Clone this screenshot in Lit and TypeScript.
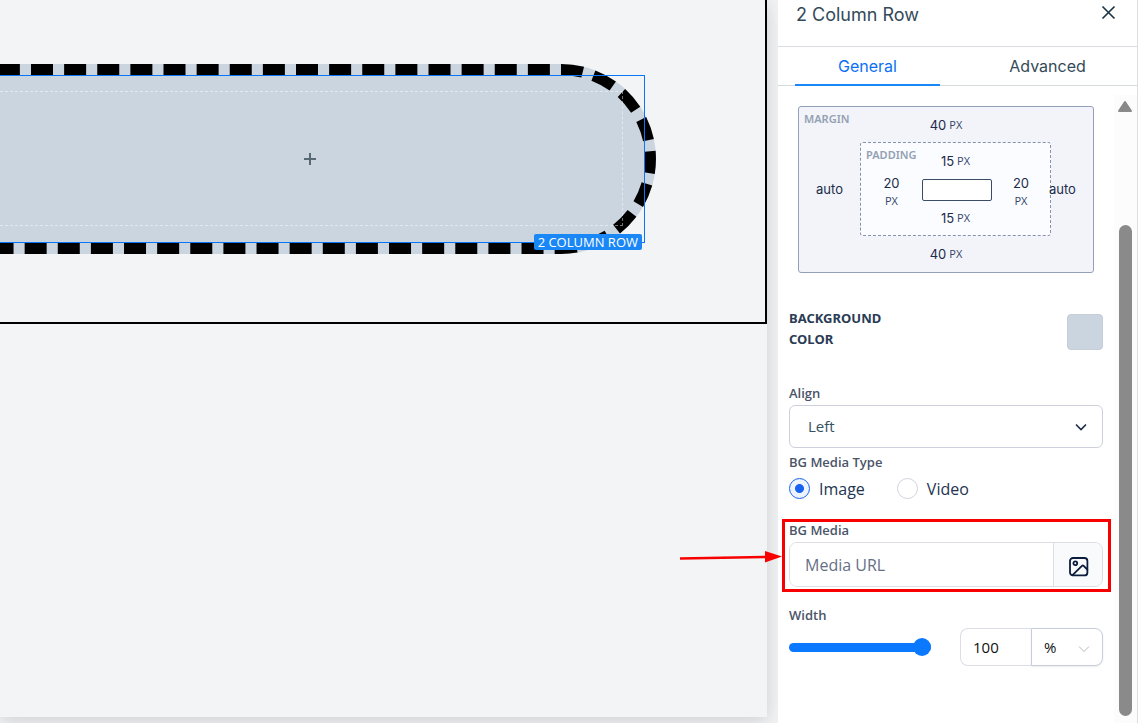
import { LitElement, html, css } from "lit";
import { customElement, property, state } from "lit/decorators.js";

const chevron = (cls: string) => html`<svg class=${cls} width="14" height="14" viewBox="0 0 14 14" aria-hidden="true">
  <path d="M2 4.5 L7 9.5 L12 4.5" fill="none" stroke="currentColor" />
</svg>`;

/** Page preview with the selected two column row. */
@customElement("page-canvas")
class PageCanvas extends LitElement {
  static styles = css`
    :host {
      display: flex;
      flex: 1;
      min-width: 0;
      overflow: hidden;
      background: #f2f3f5;
      padding: 0 11px 6px 0;
      box-sizing: border-box;
    }
    .page {
      flex: 1;
      min-width: 0;
      background: #f2f4f6;
      box-shadow: 0 4px 18px rgba(0, 0, 0, 0.15);
    }
    .section {
      border: solid #000;
      border-width: 0 2px 2px 0;
      padding: 64px 109px 68px 0;
    }
    .row {
      position: relative;
      box-sizing: border-box;
      height: 190px;
      padding: 27px 33px 28px 0;
      display: flex;
      background: #cbd5e0;
      border-radius: 0 95px 95px 0;
    }
    .dashes {
      position: absolute;
      top: 0;
      right: 0;
      overflow: visible;
    }
    .column {
      position: relative;
      flex: 1;
      display: flex;
      align-items: center;
      justify-content: center;
      padding-right: 2px;
      border: 1px dashed rgba(255, 255, 255, 0.45);
      border-left: 0;
    }
    .add {
      border: 0;
      padding: 0;
      background: none;
      display: flex;
      color: #566975;
    }
    .outline {
      position: absolute;
      inset: 11px 11px 11px 0;
      border: 1px solid #0a76f5;
      border-left: 0;
    }
    .tag {
      position: absolute;
      right: 14px;
      bottom: 4px;
      padding: 0 4px;
      border-radius: 2px;
      background: #1a87f7;
      color: #fff;
      font: 13px/16px "Open Sans", sans-serif;
      white-space: nowrap;
    }
  `;

  render() {
    return html`<main class="page">
      <section class="section">
        <div class="row">
          <svg class="dashes" width="656" height="190" aria-hidden="true">
            <path
              d="M-35.25 5.5 H561 A89.5 89.5 0 0 1 561 184.5 H-40"
              fill="none"
              stroke="#000"
              stroke-width="11"
              stroke-dasharray="22 11.125"
            />
          </svg>
          <div class="column">
            <button class="add" aria-label="Add element">
              <svg width="12" height="12"><path d="M6 0V12M0 6H12" stroke="currentColor" stroke-width="2" /></svg>
            </button>
          </div>
          <div class="outline"></div>
          <span class="tag">2 COLUMN ROW</span>
        </div>
      </section>
    </main>`;
  }
}

/** Nested margin and padding editor. */
@customElement("box-model")
class BoxModel extends LitElement {
  static styles = css`
    :host {
      display: block;
      font: 13px/18px Inter, sans-serif;
      color: #1b2b4b;
    }
    .margin {
      position: relative;
      box-sizing: border-box;
      height: 167px;
      display: grid;
      grid-template: 35px 94px 36px / 61px 191px 1fr;
      border: 1px solid #94a0b8;
      border-radius: 3px;
      background: #f2f4f9;
    }
    .padding {
      position: relative;
      box-sizing: border-box;
      display: grid;
      grid-template: 36px 22px 34px / 61px 70px 1fr;
      border: 1px dashed #8592ad;
      border-radius: 3px;
      background: #fafcff;
    }
    .caption {
      position: absolute;
      top: 4px;
      left: 5px;
      font: 600 11px/16px "Noto Sans", sans-serif;
      color: #94a0b4;
    }
    .value {
      border: 0;
      padding: 0;
      background: none;
      font: inherit;
      color: inherit;
      display: flex;
      align-items: center;
      justify-content: center;
      gap: 3px;
    }
    .wide {
      grid-column: 1 / -1;
    }
    .side {
      grid-row: 1 / -1;
      flex-direction: column;
      gap: 0;
      padding-top: 6px;
    }
    .west {
      grid-column: 1;
    }
    .east {
      grid-column: 3;
    }
    .start {
      justify-content: flex-start;
      margin-left: -2px;
      z-index: 1;
    }
    .unit {
      font: 11px/18px "Open Sans", sans-serif;
      color: #35456a;
    }
    .content {
      grid-area: 2 / 2;
      border: 1px solid #3d4c66;
      border-radius: 2px;
      background: #fff;
    }
    .top {
      grid-row: 1;
    }
    .bottom {
      grid-row: 3;
    }
  `;

  private px(value: number, place: string) {
    return html`<button class="value ${place}"><span>${value}</span><span class="unit">PX</span></button>`;
  }

  render() {
    return html`<div class="margin">
      <span class="caption">MARGIN</span>
      ${this.px(40, "wide top")}
      <button class="value">auto</button>
      <div class="padding">
        <span class="caption">PADDING</span>
        ${this.px(15, "wide top")} ${this.px(20, "side west")}
        <div class="content"></div>
        ${this.px(20, "side east")} ${this.px(15, "wide bottom")}
      </div>
      <button class="value start">auto</button>
      ${this.px(40, "wide bottom")}
    </div>`;
  }
}

/** Settings of the selected element. */
@customElement("settings-panel")
class SettingsPanel extends LitElement {
  @property() heading = "2 Column Row";
  @state() private tab = "General";
  @state() private media = "Image";

  static styles = css`
    :host {
      position: relative;
      display: flex;
      flex-direction: column;
      box-sizing: border-box;
      width: 360px;
      flex: none;
      background: #fff;
      border-right: 1px solid #dcdee2;
      font: 15px/20px "Open Sans", sans-serif;
      color: #22344f;
    }
    .head {
      display: flex;
      justify-content: space-between;
      align-items: flex-start;
      height: 46px;
      padding: 0 21px 0 18px;
      border-bottom: 1px solid #d9dce0;
    }
    .title {
      margin: 3px 0 0;
      font: 18px/24px Inter, sans-serif;
      color: #334a58;
    }
    .close {
      border: 0;
      padding: 5px 0 0;
      background: none;
      display: flex;
      color: #163244;
    }
    .tabs {
      display: grid;
      grid-template-columns: 1fr 1fr;
      gap: 35px;
      padding: 0 17px;
      height: 38px;
      border-bottom: 1px solid #d5dadd;
    }
    .tab {
      height: 39px;
      border: 0;
      border-bottom: 2px solid transparent;
      padding: 0;
      background: none;
      font: 16px/24px Inter, sans-serif;
      color: #334a58;
    }
    .tab.on {
      color: #0a6ff5;
      border-color: #1a87f7;
    }
    .body {
      flex: 1;
      display: flex;
    }
    .form {
      flex: 1;
      min-width: 0;
      padding: 20px 11px 20px;
    }
    .box {
      margin: 0 9px;
    }
    .color {
      display: flex;
      justify-content: space-between;
      align-items: flex-end;
      margin: 35px 0 34px;
    }
    .color-label {
      width: 120px;
      font: 700 13px/21px "Noto Sans", sans-serif;
      color: #2a3b55;
    }
    .swatch {
      width: 36px;
      height: 36px;
      border: 1px solid #c4ced9;
      border-radius: 4px;
      padding: 0;
      background: #cbd5e0;
    }
    .label {
      display: block;
      padding: 0;
      margin-bottom: 3px;
      font: 600 13px/18px "Open Sans", sans-serif;
      color: #4a5568;
    }
    .pick {
      position: relative;
      display: flex;
      margin-bottom: 5px;
    }
    .pick select {
      flex: 1;
      height: 43px;
      border: 1px solid #cdd0da;
      border-radius: 6px;
      padding: 0 18px 2px;
    }
    select {
      appearance: none;
      background: #fff;
      font: inherit;
      color: #33525f;
    }
    .arrow {
      position: absolute;
      right: 15px;
      top: 50%;
      margin-top: -7px;
      color: #1b2b45;
      stroke-width: 1.6;
      pointer-events: none;
    }
    .radios {
      display: flex;
      gap: 32px;
      border: 0;
      margin: 0 0 22px;
      padding: 0;
    }
    .radio {
      display: flex;
      align-items: center;
      gap: 9px;
      height: 21px;
      margin-top: 4px;
      font-size: 16px;
    }
    .radio input {
      appearance: none;
      width: 21px;
      height: 21px;
      margin: 0;
      border: 1px solid #cfd3dc;
      border-radius: 50%;
      background: #fff;
    }
    .radio input:checked {
      border-color: #1862f0;
      background: radial-gradient(circle, #1862f0 0 4px, #eef4ff 5px);
    }
    .group {
      margin: 0;
      padding: 0;
      border: 0;
    }
    .media {
      position: relative;
      margin-bottom: 19px;
    }
    .mark {
      position: absolute;
      inset: -2px -8px -5px -7px;
      border: 3px solid #f80000;
      pointer-events: none;
    }
    .pointer {
      position: absolute;
      left: -109px;
      top: 28px;
      pointer-events: none;
    }
    .url {
      display: flex;
      box-sizing: border-box;
      height: 45px;
      border: 1px solid #dcdee4;
      border-radius: 8px;
      overflow: hidden;
    }
    .url input {
      flex: 1;
      min-width: 0;
      border: 0;
      padding: 0 15px;
      font: 16px/20px "Open Sans", sans-serif;
      color: #22344f;
    }
    .url input::placeholder {
      color: #667085;
    }
    .browse {
      width: 49px;
      border: 0;
      border-left: 1px solid #dcdee4;
      padding: 7px 0 0 1px;
      background: #f9fafc;
      color: #0c1c3c;
    }
    .width {
      display: flex;
      align-items: center;
      justify-content: space-between;
      padding-top: 1px;
    }
    .range {
      appearance: none;
      width: 142px;
      height: 18px;
      margin: 0;
      background: none;
    }
    .range::-webkit-slider-runnable-track {
      height: 9px;
      border-radius: 5px;
      background: #0a78ff;
    }
    .range::-webkit-slider-thumb {
      appearance: none;
      width: 18px;
      height: 18px;
      margin-top: -5px;
      border-radius: 50%;
      background: #0a78ff;
    }
    .amount {
      position: relative;
      display: flex;
      width: 143px;
      height: 38px;
      font: 15px/20px "Open Sans", sans-serif;
    }
    .amount input,
    .amount select {
      flex: 1;
      min-width: 0;
      box-sizing: border-box;
      border: 1px solid #dcdee6;
      padding: 0 12px;
      font: inherit;
      color: #111;
      background: #fff;
    }
    .amount input {
      border-right: 0;
      border-radius: 8px 0 0 8px;
    }
    .amount select {
      border-color: #c8cddc;
      border-radius: 0 8px 8px 0;
      box-shadow: 0 1px 2px rgba(0, 0, 0, 0.08);
    }
    .arrow.pale {
      right: 12px;
      margin-top: -5px;
      color: #b4b8c0;
      stroke-width: 1;
    }
    .scroll {
      width: 23px;
      box-sizing: border-box;
      margin-top: 9px;
      padding: 6px 5px 7px 4px;
      display: flex;
      flex-direction: column;
      gap: 113px;
      background: #fcfcfc;
    }
    .thumb {
      flex: 1;
      margin-left: 1px;
      border-radius: 7px;
      background: #8a8a8a;
    }
  `;

  render() {
    return html`
      <header class="head">
        <h2 class="title">${this.heading}</h2>
        <button class="close" aria-label="Close">
          <svg width="15" height="15"><path d="M1.5 1.5L13.5 13.5M13.5 1.5L1.5 13.5" stroke="currentColor" stroke-width="1.6" /></svg>
        </button>
      </header>
      <nav class="tabs">
        ${["General", "Advanced"].map(
          (name) => html`<button class="tab ${this.tab === name ? "on" : ""}" @click=${() => (this.tab = name)}>${name}</button>`
        )}
      </nav>
      <div class="body">
        <form class="form">
          <box-model class="box"></box-model>
          <div class="color">
            <label class="color-label" for="swatch">BACKGROUND COLOR</label>
            <button class="swatch" id="swatch" type="button"></button>
          </div>
          <label class="label" for="align">Align</label>
          <div class="pick">
            <select id="align">
              <option>Left</option>
              <option>Center</option>
              <option>Right</option>
            </select>
            ${chevron("arrow")}
          </div>
          <fieldset class="group">
            <legend class="label">BG Media Type</legend>
            <div class="radios">
              ${["Image", "Video"].map(
                (kind) => html`<label class="radio">
                  <input type="radio" name="media" .checked=${this.media === kind} @change=${() => (this.media = kind)} />${kind}
                </label>`
              )}
            </div>
          </fieldset>
          <div class="media">
            <label class="label" for="url">BG Media</label>
            <div class="url">
              <input id="url" type="text" placeholder="Media URL" />
              <button class="browse" type="button" aria-label="Choose media">
                <svg width="20" height="20" viewBox="0 0 20 20" fill="none" stroke="currentColor" stroke-width="1.8" stroke-linejoin="round" stroke-linecap="round">
                  <rect x="1" y="1" width="17.4" height="17.4" rx="3" />
                  <circle cx="6.3" cy="6.3" r="1.9" />
                  <path d="M3.5 18.2L13.2 8.6Q13.8 8 14.4 8.6L18.3 12.5" />
                </svg>
              </button>
            </div>
            <div class="mark"></div>
            <svg class="pointer" width="104" height="14" aria-hidden="true">
              <path d="M0 9.5L86 8" stroke="#f80000" stroke-width="2.4" />
              <path d="M85 2L102 7.5L85 13.5Z" fill="#f80000" />
            </svg>
          </div>
          <label class="label" for="range">Width</label>
          <div class="width">
            <input class="range" id="range" type="range" min="0" max="100" value="100" />
            <div class="amount">
              <input type="text" value="100" aria-label="Width value" />
              <select aria-label="Width unit">
                <option>%</option>
                <option>px</option>
              </select>
              ${chevron("arrow pale")}
            </div>
          </div>
        </form>
        <div class="scroll" aria-hidden="true">
          <svg width="14" height="11"><path d="M7 1L13 10H1Z" fill="#8a8a8a" stroke="#8a8a8a" stroke-width="2" stroke-linejoin="round" /></svg>
          <div class="thumb"></div>
        </div>
      </div>
    `;
  }
}

@customElement("app-root")
class AppRoot extends LitElement {
  static styles = css`
    :host {
      display: flex;
      min-height: 100vh;
    }
  `;

  render() {
    return html`<page-canvas></page-canvas><settings-panel></settings-panel>`;
  }
}
